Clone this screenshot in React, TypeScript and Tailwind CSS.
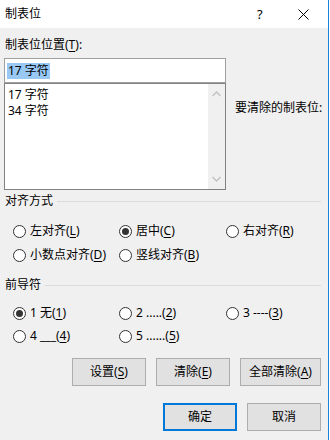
import React from "react";

const font = {
  fontFamily: '"Noto Sans", "Noto Sans CJK SC", sans-serif',
};

const U = ({ children }: { children: React.ReactNode }) => (
  <span className="underline underline-offset-2">{children}</span>
);

const Radio = ({ checked, children }: { checked?: boolean; children: React.ReactNode }) => (
  <div className="flex items-center h-[16px]">
    <span className="w-[13px] h-[13px] rounded-full border border-[#333] bg-white flex items-center justify-center shrink-0">
      {checked && <span className="w-[7px] h-[7px] rounded-full bg-[#333]" />}
    </span>
    <span className="ml-[4px] leading-[16px] whitespace-nowrap">{children}</span>
  </div>
);

const GroupHeader = ({ title }: { title: string }) => (
  <div className="flex items-center h-[16px] pl-[1px] pr-[7px]">
    <span className="leading-[16px]">{title}</span>
    <div className="flex-1 h-px bg-[#dcdcdc] ml-[4px]" />
  </div>
);

const Button = ({ w, primary, children }: { w: string; primary?: boolean; children: React.ReactNode }) => (
  <div
    className={`${w} h-[28px] flex items-center justify-center bg-[#e1e1e1] ${
      primary ? "border-2 border-[#0078d7]" : "border border-[#adadad]"
    }`}
  >
    {children}
  </div>
);

export default function App() {
  return (
    <div className="w-[330px] h-[440px] bg-white text-[12px] text-black" style={font}>
      <div className="w-[329px] h-[440px] flex flex-col border-r border-[#1883d7]">
        {/* title bar */}
        <div className="h-[28px] bg-white flex items-center pl-[5px]">
          <span className="leading-[16px]">制表位</span>
          <span className="ml-auto w-[10px] text-[13px] leading-[16px]">?</span>
          <svg width="11" height="11" viewBox="0 0 11 11" className="ml-[31px] mr-[19px]">
            <path d="M0.5 0.5 L10.5 10.5 M10.5 0.5 L0.5 10.5" stroke="#000" strokeWidth="1" />
          </svg>
        </div>

        {/* body */}
        <div className="flex-1 bg-[#f0f0f0] pl-[4px] flex flex-col">
          <div className="mt-[9px] ml-[1px] leading-[16px]">
            制表位位置(<U>T</U>):
          </div>

          <div className="mt-[5px] flex">
            <div className="w-[222px] flex flex-col">
              <div className="h-[25px] bg-white border border-[#a0a0a0] flex items-center pl-[2px]">
                <span className="bg-[#99c8f5] leading-[16px] px-[1px]">17 字符</span>
              </div>
              <div className="h-[107px] bg-white border border-[#828282] flex">
                <div className="flex-1 pl-[3px] pt-[3px]">
                  <div className="leading-[16px]">17 字符</div>
                  <div className="leading-[16px]">34 字符</div>
                </div>
                <div className="w-[17px] bg-[#f0f0f0] flex flex-col items-center justify-between py-[7px]">
                  <svg width="9" height="6" viewBox="0 0 9 6">
                    <path d="M0.5 5 L4.5 1 L8.5 5" stroke="#c2c2c2" strokeWidth="1.5" fill="none" />
                  </svg>
                  <svg width="9" height="6" viewBox="0 0 9 6">
                    <path d="M0.5 1 L4.5 5 L8.5 1" stroke="#c2c2c2" strokeWidth="1.5" fill="none" />
                  </svg>
                </div>
              </div>
            </div>
            <div className="ml-[9px] mt-[42px] leading-[16px] whitespace-nowrap">要清除的制表位:</div>
          </div>

          <div className="mt-[3px]">
            <GroupHeader title="对齐方式" />
          </div>
          <div className="mt-[14px] pl-[9px] grid grid-cols-[106px_107px_auto]">
            <Radio>
              左对齐(<U>L</U>)
            </Radio>
            <Radio checked>
              居中(<U>C</U>)
            </Radio>
            <Radio>
              右对齐(<U>R</U>)
            </Radio>
          </div>
          <div className="mt-[8px] pl-[9px] grid grid-cols-[106px_107px_auto]">
            <Radio>
              小数点对齐(<U>D</U>)
            </Radio>
            <Radio>
              竖线对齐(<U>B</U>)
            </Radio>
          </div>

          <div className="mt-[14px]">
            <GroupHeader title="前导符" />
          </div>
          <div className="mt-[12px] pl-[9px] grid grid-cols-[106px_107px_auto]">
            <Radio checked>
              1 无(<U>1</U>)
            </Radio>
            <Radio>
              2 .....(<U>2</U>)
            </Radio>
            <Radio>
              3 ----(<U>3</U>)
            </Radio>
          </div>
          <div className="mt-[7px] pl-[9px] grid grid-cols-[106px_107px_auto]">
            <Radio>
              4 ___(<U>4</U>)
            </Radio>
            <Radio>
              5 ......(<U>5</U>)
            </Radio>
          </div>

          <div className="mt-[14px] flex justify-end gap-[10px] pr-[7px]">
            <Button w="w-[74px]">
              设置(<U>S</U>)
            </Button>
            <Button w="w-[74px]">
              清除(<U>E</U>)
            </Button>
            <Button w="w-[81px]">
              全部清除(<U>A</U>)
            </Button>
          </div>
          <div className="mt-[17px] flex justify-end gap-[10px] pr-[7px]">
            <Button w="w-[74px]" primary>
              确定
            </Button>
            <Button w="w-[74px]">取消</Button>
          </div>
        </div>
      </div>
    </div>
  );
}
